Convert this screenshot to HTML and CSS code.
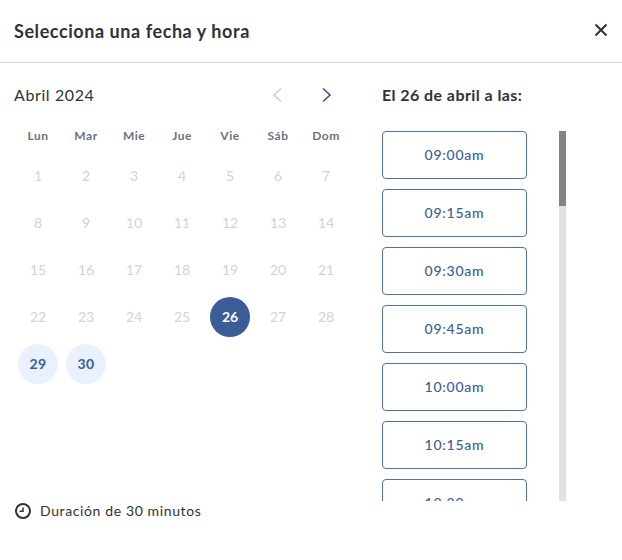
FILE: index.html
```
<!DOCTYPE html>
<html lang="es">
<head>
    <meta charset="UTF-8">
    <title>Selecciona una fecha y hora</title>
    <link rel="stylesheet" href="styles.css">
</head>
<body>
<div class="modal">
    <header class="modal_header">
        <h1 class="modal_title">Selecciona una fecha y hora</h1>
        <button class="icon_button close_button" aria-label="Cerrar">
            <svg width="14" height="14" viewBox="0 0 14 14"><path d="M1.5 1.5l11 11M12.5 1.5l-11 11"/></svg>
        </button>
    </header>

    <div class="modal_body">
        <section class="calendar">
            <div class="calendar_header">
                <span class="month">Abril 2024</span>
                <div class="month_nav">
                    <button class="icon_button prev" aria-label="Mes anterior" disabled>
                        <svg width="10" height="16" viewBox="0 0 10 16"><path d="M9 1.5L2 8l7 6.5"/></svg>
                    </button>
                    <button class="icon_button next" aria-label="Mes siguiente">
                        <svg width="10" height="16" viewBox="0 0 10 16"><path d="M1 1.5L8 8l-7 6.5"/></svg>
                    </button>
                </div>
            </div>
            <div class="weekdays">
                <span>Lun</span><span>Mar</span><span>Mie</span><span>Jue</span><span>Vie</span><span>Sáb</span><span>Dom</span>
            </div>
            <div class="days">
                <span class="day">1</span><span class="day">2</span><span class="day">3</span><span class="day">4</span><span class="day">5</span><span class="day">6</span><span class="day">7</span>
                <span class="day">8</span><span class="day">9</span><span class="day">10</span><span class="day">11</span><span class="day">12</span><span class="day">13</span><span class="day">14</span>
                <span class="day">15</span><span class="day">16</span><span class="day">17</span><span class="day">18</span><span class="day">19</span><span class="day">20</span><span class="day">21</span>
                <span class="day">22</span><span class="day">23</span><span class="day">24</span><span class="day">25</span><span class="day selected">26</span><span class="day">27</span><span class="day">28</span>
                <span class="day available">29</span><span class="day available">30</span>
            </div>
            <div class="duration">
                <svg width="16" height="16" viewBox="0 0 16 16"><circle cx="8" cy="8" r="7"/><path d="M8 4.5V8.3H4.5"/></svg>
                <span>Duración de 30 minutos</span>
            </div>
        </section>

        <section class="schedule">
            <h2 class="schedule_title">El 26 de abril a las:</h2>
            <div class="schedule_content">
                <div class="times">
                    <button class="time_button">09:00am</button>
                    <button class="time_button">09:15am</button>
                    <button class="time_button">09:30am</button>
                    <button class="time_button">09:45am</button>
                    <button class="time_button">10:00am</button>
                    <button class="time_button">10:15am</button>
                    <button class="time_button">10:30am</button>
                </div>
                <div class="scroll_track"><div class="scroll_thumb"></div></div>
            </div>
        </section>
    </div>
</div>
</body>
</html>
```
FILE: styles.css
```
* {
    box-sizing: border-box;
}

body {
    margin: 0;
    background-color: #fff;
    color: #303236;
    font-family: Lato, "Open Sans", sans-serif;
}

.modal {
    height: 560px;
    overflow: hidden;
}

.modal_header {
    height: 63px;
    padding: 0 14px;
    border-bottom: 1px solid #d2d2d2;
    display: flex;
    align-items: center;
    justify-content: space-between;
}

.modal_title {
    margin: 0;
    font-size: 18px;
    line-height: 24px;
    font-weight: 700;
    letter-spacing: 0.57px;
}

.icon_button {
    padding: 0;
    border: 0;
    background: none;
    display: flex;
    color: #303236;
}

svg {
    display: block;
    fill: none;
    stroke: currentColor;
    stroke-width: 2;
}

.close_button {
    margin-bottom: 2px;
}

.modal_body {
    display: flex;
    padding: 20px 0 0 14px;
}

.calendar {
    width: 336px;
    margin-right: 32px;
    display: flex;
    flex-direction: column;
}

.calendar_header {
    height: 24px;
    display: flex;
    align-items: center;
    justify-content: space-between;
}

.month {
    padding-bottom: 2px;
    font-size: 16px;
    letter-spacing: 0.6px;
}

.month_nav {
    display: flex;
    gap: 40px;
    margin-right: 18px;
}

.month_nav svg {
    stroke-width: 1.7;
}

.prev {
    color: #d0d0d0;
}

.next {
    color: #3b5c96;
}

.weekdays {
    margin-top: 20px;
    display: grid;
    grid-template-columns: repeat(7, 48px);
    text-align: center;
    font-size: 12px;
    line-height: 18px;
    font-weight: 700;
    letter-spacing: 0.5px;
    color: #6b737f;
}

.days {
    margin-top: 11px;
    display: grid;
    grid-template-columns: repeat(7, 48px);
    row-gap: 7px;
    justify-items: center;
}

.day {
    width: 40px;
    height: 40px;
    border-radius: 50%;
    text-align: center;
    font-size: 14px;
    line-height: 40px;
    color: #d2d3d5;
}

.available {
    background-color: #e8f1fd;
    color: #3b5c96;
    font-weight: 700;
    letter-spacing: 0.4px;
}

.selected {
    background-color: #3b5c96;
    color: #fff;
    font-weight: 700;
}

.duration {
    margin-top: 115px;
    display: flex;
    align-items: center;
    gap: 9px;
    padding-left: 1px;
    font-size: 14px;
    line-height: 24px;
    letter-spacing: 0.62px;
}

.duration path {
    stroke-width: 1.5;
}

.schedule_title {
    margin: 0;
    font-size: 16px;
    line-height: 24px;
    font-weight: 700;
    letter-spacing: 0.43px;
}

.schedule_content {
    margin-top: 24px;
    height: 370px;
    display: flex;
    gap: 32px;
}

.times {
    display: flex;
    flex-direction: column;
    gap: 10px;
    overflow: hidden;
}

.time_button {
    flex: none;
    width: 145px;
    height: 48px;
    padding: 0 0 2px;
    border: 1px solid #536fa5;
    border-radius: 4px;
    background-color: #fff;
    color: #3b5c96;
    font-family: inherit;
    font-size: 14px;
    font-weight: 500;
    letter-spacing: 0.75px;
}

.scroll_track {
    width: 7px;
    background-color: #e1e1e1;
}

.scroll_thumb {
    height: 75px;
    background-color: #838383;
}
```
